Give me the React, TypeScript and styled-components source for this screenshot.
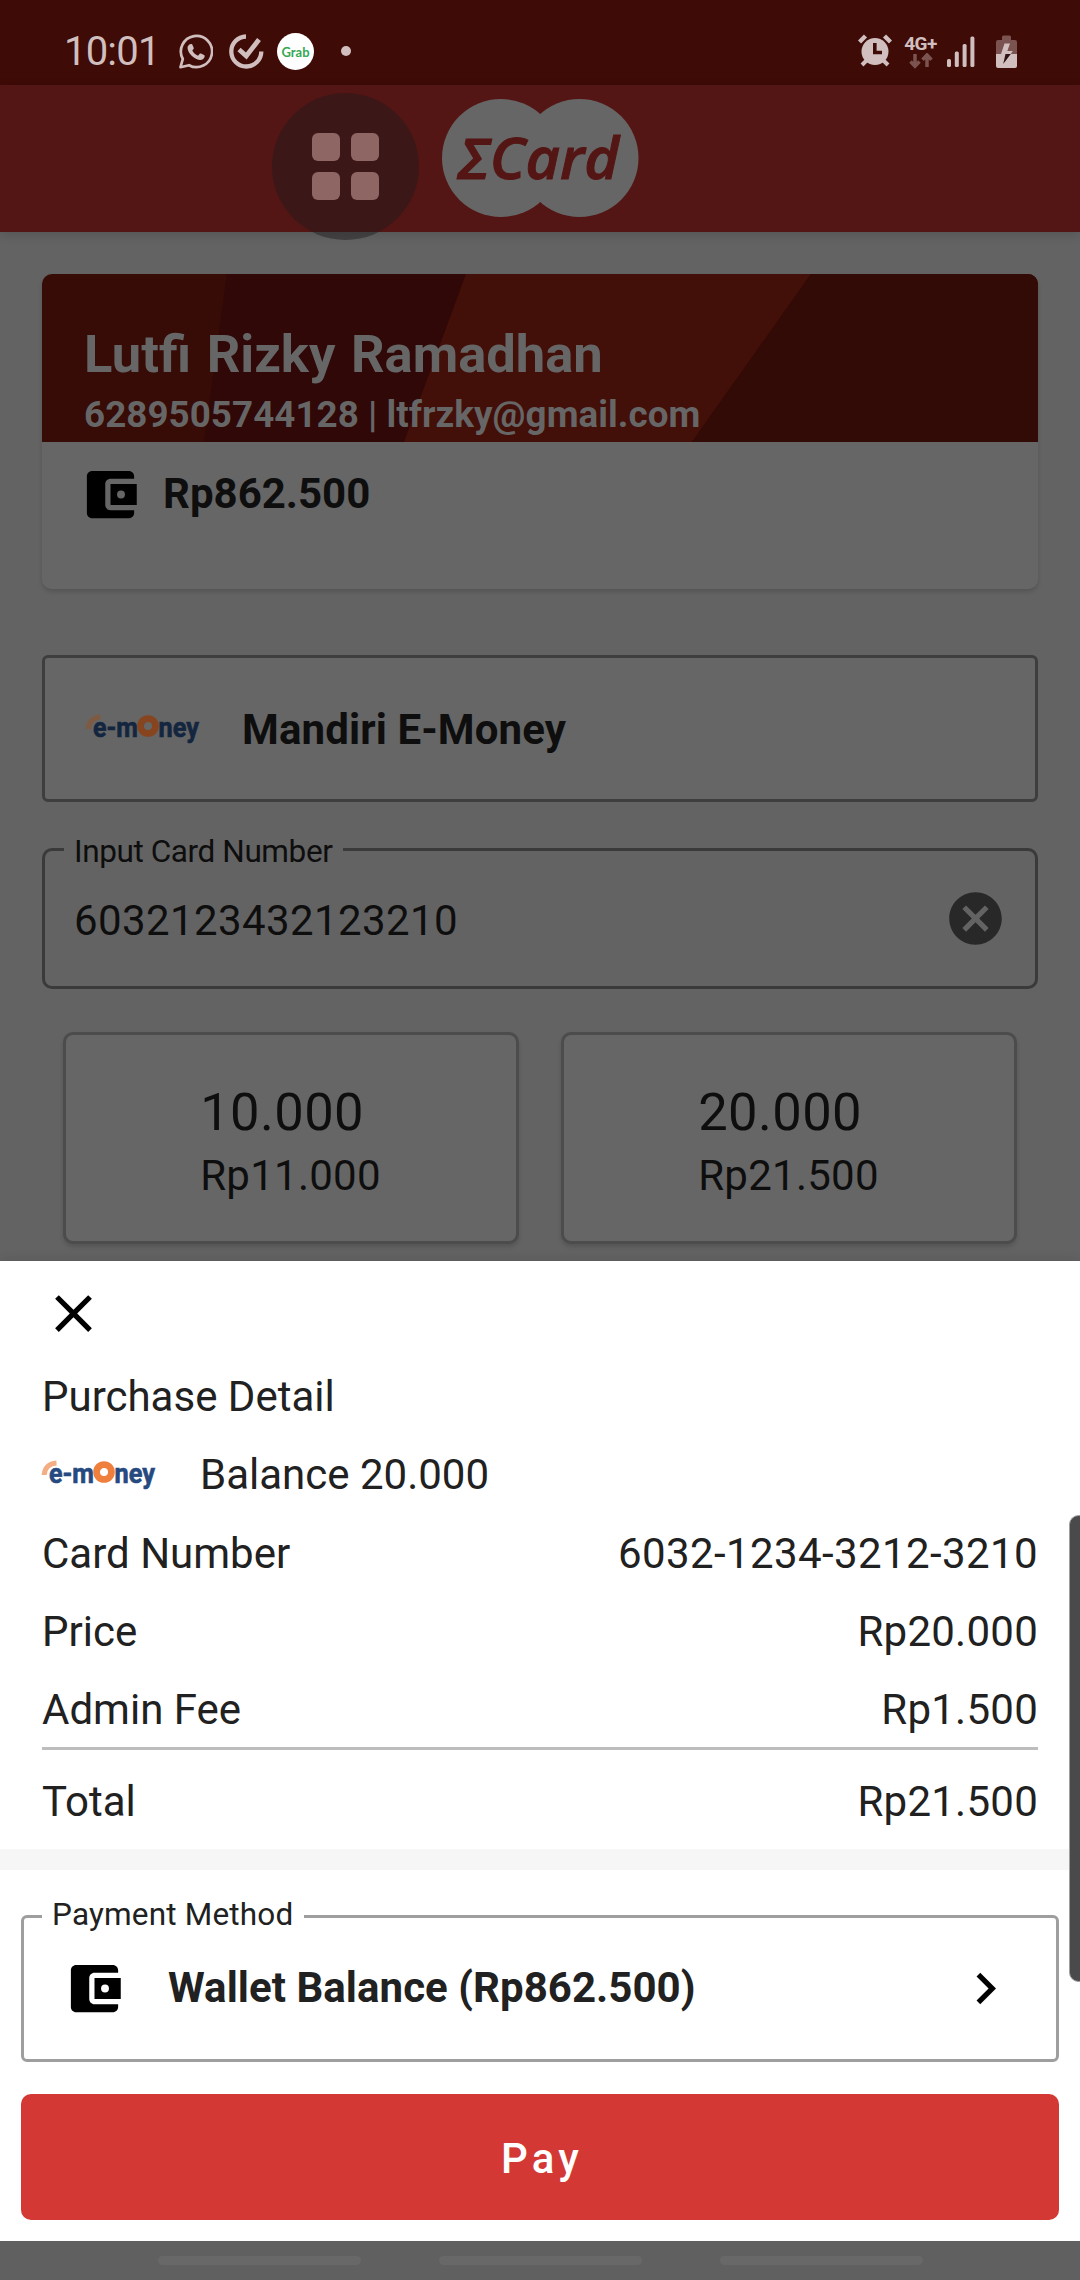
import React from "react";
import styled, { createGlobalStyle } from "styled-components";

const GlobalStyle = createGlobalStyle`
  * { box-sizing: border-box; }
  body { margin: 0; background: #636363; }
`;

const ink = "#0e0e0e";

const Screen = styled.div`
  position: relative;
  width: 1080px;
  height: 2280px;
  overflow: hidden;
  display: flex;
  flex-direction: column;
  background: #636363;
  font-family: Roboto, "Liberation Sans", sans-serif;
  color: ${ink};
`;

/* ---------- status bar ---------- */

const StatusBar = styled.header`
  height: 85px;
  flex: none;
  display: flex;
  justify-content: space-between;
  padding: 17px 63px 0 64px;
  background: #3e0b07;
  color: #d0bfbe;
`;

const StatusGroup = styled.div`
  height: 68px;
  display: flex;
  align-items: center;
`;

const Clock = styled.span`
  width: 115px;
  padding-top: 1px;
  font-size: 40px;
  line-height: 68px;
  letter-spacing: -0.8px;
`;

const StatusIcon = styled.svg<{ $gap?: number }>`
  display: block;
  flex: none;
  margin-left: ${(p) => p.$gap ?? 0}px;
`;

const Dot = styled.i`
  width: 10px;
  height: 10px;
  margin-left: 27px;
  border-radius: 50%;
  background: #d0bfbe;
`;

const Network = styled.div`
  width: 33px;
  height: 38px;
  margin-left: 12px;
  padding-top: 3px;
  display: flex;
  flex-direction: column;
  align-items: center;
  font-size: 19px;
  font-weight: 700;
  line-height: 18px;
  letter-spacing: -0.6px;
`;

/* ---------- app bar ---------- */

const AppBar = styled.div`
  position: relative;
  z-index: 1;
  height: 147px;
  flex: none;
  display: flex;
  justify-content: center;
  padding-top: 13px;
  background: #541614;
  box-shadow: 0 3px 10px rgba(0, 0, 0, 0.15);
`;

const AssistiveButton = styled.div`
  position: absolute;
  z-index: 2;
  left: 272px;
  top: 93px;
  width: 147px;
  height: 147px;
  padding: 40px;
  display: grid;
  grid-template-columns: 28px 28px;
  grid-auto-rows: 28px;
  gap: 11px;
  border-radius: 50%;
  background: rgba(30, 25, 27, 0.45);
`;

const Tile = styled.i`
  border-radius: 6px;
  background: #8e6664;
`;

/* ---------- dimmed page ---------- */

const Page = styled.main`
  height: 1029px;
  flex: none;
  padding: 42px 42px 0;
  overflow: hidden;
`;

const AccountCard = styled.section`
  height: 315px;
  overflow: hidden;
  border-radius: 10px;
  background: #666;
`;

const AccountShadow = styled.div`
  border-radius: 10px;
  box-shadow: 0 3px 4px rgba(0, 0, 0, 0.14);
`;

const Banner = styled.div`
  position: relative;
  height: 168px;
  padding: 51px 42px 0;
  color: #666;
  font-weight: 700;
`;

const BannerArt = styled.svg`
  position: absolute;
  inset: 0;
`;

const UserName = styled.div`
  position: relative;
  font-size: 52.5px;
  line-height: 58px;
  word-spacing: 2.6px;
`;

const UserContact = styled.div`
  position: relative;
  margin-top: 10px;
  font-size: 36.75px;
  line-height: 44px;
  letter-spacing: 0.06px;
  white-space: nowrap;
`;

const BalanceRow = styled.div`
  height: 105px;
  display: flex;
  align-items: center;
  padding-left: 37px;
  gap: 21px;
`;

const Strong = styled.span`
  font-size: 42px;
  line-height: 50px;
  font-weight: 700;
`;

const CardBalance = styled(Strong)`
  margin-top: -2px;
`;

const ProviderBox = styled.div`
  height: 147px;
  margin-top: 66px;
  padding-left: 41px;
  display: flex;
  align-items: center;
  border: 3px solid #3e3e3e;
  border-radius: 6px;
  background: #666;

  ${Strong} {
    margin-left: 41px;
    margin-top: 3px;
    letter-spacing: 0.12px;
  }
`;

const Outlined = styled.fieldset<{
  $line: string;
  $radius: number;
  $top: number;
  $height: number;
}>`
  min-width: 0;
  margin: ${(p) => p.$top}px 0 0;
  padding: 0;
  height: ${(p) => p.$height}px;
  border: 3px solid ${(p) => p.$line};
  border-radius: ${(p) => p.$radius}px;
`;

const Caption = styled.legend<{ $inset: number; $height: number; $tracking: number }>`
  height: ${(p) => p.$height}px;
  margin-left: ${(p) => p.$inset}px;
  padding: 0 11px 0 10px;
  font-size: 31.5px;
  line-height: 37px;
  letter-spacing: ${(p) => p.$tracking}px;
`;

const CardInputRow = styled.div`
  display: flex;
  align-items: flex-start;
  justify-content: space-between;
  padding: 21px 28px 0 29px;
`;

const CardInput = styled.span`
  margin-top: 9px;
  font-size: 42px;
  line-height: 50px;
  letter-spacing: 0.4px;
`;

const Denominations = styled.div`
  display: grid;
  grid-template-columns: 1fr 1fr;
  gap: 42px;
  padding: 0 21px;
  margin-top: 43px;
`;

const Denomination = styled.div`
  height: 212px;
  display: flex;
  justify-content: center;
  padding: 46px 1px 0 0;
  border: 3px solid #4c4c4c;
  border-radius: 10px;
  background: #666;
  box-shadow: 0 3px 4px rgba(0, 0, 0, 0.14);
`;

const Amount = styled.div`
  font-size: 52.5px;
  line-height: 62px;
  letter-spacing: 0.4px;
`;

const Cost = styled.div`
  margin-top: 8px;
  font-size: 42px;
  line-height: 50px;
  letter-spacing: 0.25px;
`;

/* ---------- bottom sheet ---------- */

const Sheet = styled.section`
  height: 980px;
  flex: none;
  background: #fff;
  color: #212121;
  box-shadow: 0 0 12px rgba(0, 0, 0, 0.12);
`;

const Details = styled.div`
  height: 588px;
  padding: 21px 42px 0;
`;

const CloseIcon = styled.svg`
  display: block;
`;

const Line = styled.div<{ $top: number }>`
  height: 50px;
  margin-top: ${(p) => p.$top}px;
  display: flex;
  align-items: center;
  justify-content: space-between;
  font-size: 42px;
  line-height: 50px;
`;

const Value = styled.span<{ $tracking?: number }>`
  letter-spacing: ${(p) => p.$tracking ?? 0.25}px;
`;

const Product = styled.div`
  display: flex;
  align-items: center;
  gap: 43px;
`;

const Divider = styled.hr`
  height: 3px;
  margin: 12px 0 0;
  border: 0;
  background: #bdbdbd;
`;

const Band = styled.div`
  height: 21px;
  background: #f6f6f6;
`;

const Checkout = styled.div`
  padding: 0 21px;
`;

const MethodRow = styled.div`
  height: 63px;
  margin-top: 20px;
  padding: 0 39px 0 39px;
  display: flex;
  align-items: center;

  ${Strong} {
    flex: 1;
    margin-left: 42px;
    margin-top: -1px;
    letter-spacing: 0.05px;
  }
`;

const PayButton = styled.button`
  display: block;
  width: 100%;
  height: 126px;
  margin-top: 32px;
  padding: 4px 0 0 4px;
  border: 0;
  border-radius: 10px;
  background: #d43834;
  color: #fff;
  font: 500 42px/50px Roboto, sans-serif;
  letter-spacing: 4.2px;
`;

const NavBar = styled.footer`
  height: 39px;
  flex: none;
  display: flex;
  justify-content: center;
  gap: 78px;
  padding-top: 15px;
  background: #606060;
`;

const NavPill = styled.i`
  width: 203px;
  height: 9px;
  border-radius: 5px;
  background: #686868;
`;

const EdgeHandle = styled.div`
  position: absolute;
  right: -8px;
  top: 1515px;
  width: 19px;
  height: 467px;
  border: 1px solid #a0a0a0;
  border-radius: 14px;
  background: #4a4a4a;
`;

/* ---------- drawings ---------- */

const WalletIcon = ({ hole }: { hole: string }) => (
  <svg width="63" height="63" viewBox="0 0 24 24">
    <path d="M21 18v1c0 1.1-.9 2-2 2H5c-1.11 0-2-.9-2-2V5c0-1.1.89-2 2-2h14c1.1 0 2 .9 2 2v1h-9c-1.11 0-2 .9-2 2v8c0 1.1.89 2 2 2h9zm-9-2h10V8H12v8z" />
    <circle cx="16" cy="12" r="1.5" fill={hole} />
  </svg>
);

const EMoneyMark = styled.svg`
  display: block;
  flex: none;
  overflow: visible;
`;

const EMoneyLogo = ({ dim }: { dim?: boolean }) => {
  const navy = dim ? "#14263f" : "#26497f";
  const orange = dim ? "#86451f" : "#ee7f3c";
  const pale = dim ? "#7f5a42" : "#f3ae83";
  return (
    <EMoneyMark width="115" height="30" viewBox="0 0 115 30">
      <path d="M2.200 15C2.500 8 7 3.500 14.500 3" fill="none" stroke={pale} strokeWidth="5" />
      <g fill={navy} stroke={navy} strokeWidth=".6" fontFamily="Roboto, sans-serif" fontWeight="700" fontSize="27">
        <text x="7" y="22.500" textLength="45" lengthAdjust="spacingAndGlyphs">e-m</text>
        <text x="72.500" y="22.500" textLength="40.500" lengthAdjust="spacingAndGlyphs">ney</text>
      </g>
      <circle cx="62" cy="12" r="7.400" fill="none" stroke={orange} strokeWidth="6.800" />
    </EMoneyMark>
  );
};

const BrandLogo = () => (
  <svg width="198" height="120" viewBox="0 0 198 120">
    <circle cx="60" cy="60" r="59" fill="#666" />
    <circle cx="138.500" cy="60" r="59" fill="#666" />
    <text
      x="17"
      y="81"
      fill="#541614"
      stroke="#541614"
      strokeWidth="1"
      fontFamily='"Open Sans", "Noto Sans", sans-serif'
      fontWeight="600"
      fontStyle="italic"
      fontSize="57"
      textLength="161"
      lengthAdjust="spacingAndGlyphs"
    >
      ΣCard
    </text>
  </svg>
);

const WhatsAppIcon = () => (
  <StatusIcon width="34" height="35" viewBox="0 0 34 35">
    <path d="M1.500 33.200 3.800 25A15.600 15.600 0 1 1 10 31.200Z" fill="none" stroke="#d0bfbe" strokeWidth="2.700" strokeLinejoin="round" />
    <path d="M12.200 10c.7 0 1 .2 1.300.9l1.200 2.900c.2.500.1.900-.2 1.300l-1.200 1.500c1.300 2.400 3.200 4.200 5.700 5.200l1.700-2c.4-.4.8-.5 1.300-.3l3 1.500c.6.300.8.600.7 1.200-.3 2.500-2.500 4.100-5 3.800-5.600-.8-11.700-6.300-12.200-12C8.400 12.200 10.200 10 12.200 10Z" fill="#d0bfbe" />
  </StatusIcon>
);

const TaskCheckIcon = () => (
  <StatusIcon $gap={16} width="35" height="35" viewBox="0 0 35 35">
    <path d="M17 2.500A15 15 0 1 0 32.300 17.500" fill="none" stroke="#d0bfbe" strokeWidth="4.300" />
    <path d="M10 15.500 17.300 22 30 5.500" fill="none" stroke="#d0bfbe" strokeWidth="4.800" />
  </StatusIcon>
);

const GrabIcon = () => (
  <StatusIcon $gap={13} width="37" height="37" viewBox="0 0 37 37">
    <circle cx="18.500" cy="18.500" r="18.500" fill="#fff" />
    <text x="4.500" y="23.500" fill="#35a853" fontFamily="Lato, sans-serif" fontWeight="700" fontSize="12.500" textLength="28" lengthAdjust="spacingAndGlyphs">Grab</text>
  </StatusIcon>
);

const AlarmIcon = () => (
  <StatusIcon width="34" height="34" viewBox="0 0 34 34">
    <g stroke="#d0bfbe" fill="none">
      <path d="M1.500 8 7.500 2M32.500 8 26.500 2" strokeWidth="4.400" />
      <path d="m4 31 5-5m21 5-5-5" strokeWidth="4" />
    </g>
    <circle cx="17" cy="17.500" r="13.500" fill="#d0bfbe" />
    <path d="M16.800 9v9.500h7.200" fill="none" stroke="#3e0b07" strokeWidth="3.600" />
  </StatusIcon>
);

const DataArrows = () => (
  <svg width="24" height="16" viewBox="0 0 24 16">
    <path d="M6 1v12M1.500 8.500 6 13.200l4.500-4.700M18 14V2M13.500 6.800 18 2l4.500 4.800" fill="none" stroke="#7b5350" strokeWidth="3.500" />
  </svg>
);

const SignalIcon = () => (
  <StatusIcon $gap={10} width="28" height="31" viewBox="0 0 28 31" fill="#d0bfbe">
    <rect x="0" y="23" width="4" height="8" rx="1.500" />
    <rect x="7.800" y="15.500" width="4" height="15.500" rx="1.500" />
    <rect x="15.600" y="8" width="4" height="23" rx="1.500" />
    <rect x="23.400" y="0.500" width="4" height="30.500" rx="1.500" />
  </StatusIcon>
);

const BatteryIcon = () => (
  <StatusIcon $gap={21} width="21" height="33" viewBox="0 0 21 33">
    <path d="M6 2a1.500 1.500 0 0 1 1.500-1.500h6A1.500 1.500 0 0 1 15 2v3h4a2 2 0 0 1 2 2v12H0V7a2 2 0 0 1 2-2h4Z" fill="#7b5350" />
    <path d="M0 19h21v12a2 2 0 0 1-2 2H2a2 2 0 0 1-2-2Z" fill="#d0bfbe" />
    <path d="M8.500 8.500H14L11.300 16h5.500l-2 3H5Z" fill="#d0bfbe" />
    <path d="M9.500 19h5.300L7.200 29Z" fill="#2b1413" />
  </StatusIcon>
);

const denominations = [
  { amount: "10.000", cost: "Rp11.000" },
  { amount: "20.000", cost: "Rp21.500" },
];

export default function App() {
  return (
    <Screen>
      <GlobalStyle />
      <StatusBar>
        <StatusGroup>
          <Clock>10:01</Clock>
          <WhatsAppIcon />
          <TaskCheckIcon />
          <GrabIcon />
          <Dot />
        </StatusGroup>
        <StatusGroup>
          <AlarmIcon />
          <Network>
            4G+
            <DataArrows />
          </Network>
          <SignalIcon />
          <BatteryIcon />
        </StatusGroup>
      </StatusBar>

      <AppBar>
        <BrandLogo />
      </AppBar>

      <Page>
        <AccountShadow>
          <AccountCard>
            <Banner>
              <BannerArt width="996" height="168" viewBox="0 0 996 168">
                <rect width="996" height="168" fill="#370b06" />
                <path d="M185 0H424L362 168H162Z" fill="#2f0807" />
                <path d="M424 0H769L650 168H362Z" fill="#430f09" />
                <path d="M769 0H996V168H650Z" fill="#320a06" />
              </BannerArt>
              <UserName>Lutfi Rizky Ramadhan</UserName>
              <UserContact>6289505744128 | ltfrzky@gmail.com</UserContact>
            </Banner>
            <BalanceRow>
              <WalletIcon hole="#666" />
              <CardBalance>Rp862.500</CardBalance>
            </BalanceRow>
          </AccountCard>
        </AccountShadow>

        <ProviderBox>
          <EMoneyLogo dim />
          <Strong>Mandiri E-Money</Strong>
        </ProviderBox>

        <Outlined $line="#3a3a3a" $radius={10} $top={31} $height={156}>
          <Caption $inset={19} $height={33} $tracking={-0.4}>
            Input Card Number
          </Caption>
          <CardInputRow>
            <CardInput>6032123432123210</CardInput>
            <svg width="63" height="63" viewBox="0 0 24 24" fill="#282828">
              <path d="M12 2C6.470 2 2 6.470 2 12s4.470 10 10 10 10-4.470 10-10S17.530 2 12 2zm5 13.590L15.590 17 12 13.410 8.410 17 7 15.590 10.590 12 7 8.410 8.410 7 12 10.590 15.590 7 17 8.410 13.410 12 17 15.590z" />
            </svg>
          </CardInputRow>
        </Outlined>

        <Denominations>
          {denominations.map((d) => (
            <Denomination key={d.amount}>
              <div>
                <Amount>{d.amount}</Amount>
                <Cost>{d.cost}</Cost>
              </div>
            </Denomination>
          ))}
        </Denominations>
      </Page>

      <Sheet>
        <Details>
          <CloseIcon width="63" height="63" viewBox="0 0 24 24">
            <path d="M19 6.410 17.590 5 12 10.590 6.410 5 5 6.410 10.590 12 5 17.590 6.410 19 12 13.410 17.590 19 19 17.590 13.410 12z" />
          </CloseIcon>
          <Line $top={27}>Purchase Detail</Line>
          <Line $top={28}>
            <Product>
              <EMoneyLogo />
              <span>Balance 20.000</span>
            </Product>
          </Line>
          <Line $top={29}>
            <span>Card Number</span>
            <Value $tracking={0.4}>6032-1234-3212-3210</Value>
          </Line>
          <Line $top={28}>
            <span>Price</span>
            <Value>Rp20.000</Value>
          </Line>
          <Line $top={28}>
            <span>Admin Fee</span>
            <Value>Rp1.500</Value>
          </Line>
          <Divider />
          <Line $top={27}>
            <span>Total</span>
            <Value>Rp21.500</Value>
          </Line>
        </Details>
        <Band />
        <Checkout>
          <Outlined $line="#9e9e9e" $radius={6} $top={26} $height={166}>
            <Caption $inset={18} $height={41} $tracking={0.18}>
              Payment Method
            </Caption>
            <MethodRow>
              <WalletIcon hole="#fff" />
              <Strong>Wallet Balance (Rp862.500)</Strong>
              <svg width="63" height="63" viewBox="0 0 24 24">
                <path d="M10 6 8.590 7.410 13.170 12l-4.580 4.590L10 18l6-6z" />
              </svg>
            </MethodRow>
          </Outlined>
          <PayButton>Pay</PayButton>
        </Checkout>
      </Sheet>

      <NavBar>
        <NavPill />
        <NavPill />
        <NavPill />
      </NavBar>

      <AssistiveButton>
        <Tile />
        <Tile />
        <Tile />
        <Tile />
      </AssistiveButton>
      <EdgeHandle />
    </Screen>
  );
}
